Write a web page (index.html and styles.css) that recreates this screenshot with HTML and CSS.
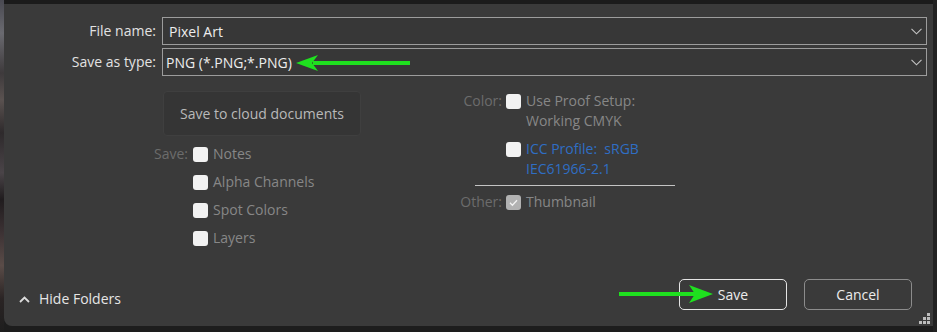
FILE: index.html
```html
<!DOCTYPE html>
<html lang="en">
<head>
<meta charset="utf-8">
<title>Save As</title>
<link rel="stylesheet" href="styles.css">
</head>
<body>
<div class="screen">
  <div class="photo"></div>
  <div class="main">
    <div class="topbar"></div>
    <div class="dialog">
      <div class="fields">
        <label class="flabel">File name:</label>
        <div class="combo"><span class="val name">Pixel Art</span><svg class="chev" width="11" height="7" viewBox="0 0 11 7"><path d="M0.5 0.8 L5.5 5.8 L10.5 0.8" fill="none" stroke="#c4c4c4" stroke-width="1.1"/></svg></div>
        <label class="flabel">Save as type:</label>
        <div class="combo"><span class="val type">PNG (*.PNG;*.PNG)</span><svg class="chev" width="11" height="7" viewBox="0 0 11 7"><path d="M0.5 0.8 L5.5 5.8 L10.5 0.8" fill="none" stroke="#c4c4c4" stroke-width="1.1"/></svg></div>
      </div>

      <div class="options">
        <div class="col-left">
          <button class="cloud">Save to cloud documents</button>
          <div class="opt-grid">
            <span class="olabel">Save:</span>
            <div class="check"><span class="cb"></span><span class="ctext">Notes</span></div>
            <span></span>
            <div class="check"><span class="cb"></span><span class="ctext">Alpha Channels</span></div>
            <span></span>
            <div class="check"><span class="cb"></span><span class="ctext">Spot Colors</span></div>
            <span></span>
            <div class="check"><span class="cb"></span><span class="ctext">Layers</span></div>
          </div>
        </div>

        <div class="col-right">
          <div class="rgrid">
            <span class="olabel">Color:</span>
            <div class="check"><span class="cb"></span><span class="ctext">Use Proof Setup:<br>Working CMYK</span></div>
            <span></span>
            <div class="check icc"><span class="cb"></span><span class="ctext link">ICC Profile:&nbsp; sRGB<br>IEC61966-2.1</span></div>
          </div>
          <div class="sep"></div>
          <div class="rgrid">
            <span class="olabel">Other:</span>
            <div class="check"><span class="cb checked"><svg width="15" height="15" viewBox="0 0 15 15"><path d="M4 7.8 L6.4 10.2 L11 5.2" fill="none" stroke="#f2f2f2" stroke-width="1.3"/></svg></span><span class="ctext">Thumbnail</span></div>
          </div>
        </div>
      </div>

      <div class="footer">
        <button class="hide"><svg width="11" height="7" viewBox="0 0 11 7"><path d="M1 6 L5.5 1.5 L10 6" fill="none" stroke="#dcdcdc" stroke-width="1.8"/></svg><span>Hide Folders</span></button>
        <div class="btns">
          <button class="btn primary">Save</button>
          <button class="btn">Cancel</button>
        </div>
      </div>
      <svg class="grip" width="13" height="12" viewBox="0 0 13 12">
        <rect x="9" y="0" width="3" height="3" fill="#bdbdbd"/>
        <rect x="5" y="4" width="3" height="3" fill="#bdbdbd"/>
        <rect x="9" y="4" width="3" height="3" fill="#bdbdbd"/>
        <rect x="1" y="8" width="3" height="3" fill="#bdbdbd"/>
        <rect x="5" y="8" width="3" height="3" fill="#bdbdbd"/>
        <rect x="9" y="8" width="3" height="3" fill="#bdbdbd"/>
      </svg>
    </div>
    <div class="bottombar"></div>
  </div>
  <div class="rightbar"></div>

  <svg class="arrow arrow-type" width="120" height="20" viewBox="0 0 120 20">
    <rect x="18" y="8" width="97" height="4" fill="#1fe01f"/>
    <path d="M1 10 L23 2 L17 10 L23 18 Z" fill="#1fe01f"/>
  </svg>
  <svg class="arrow arrow-save" width="100" height="20" viewBox="0 0 100 20">
    <rect x="0" y="8" width="80" height="4" fill="#1fe01f"/>
    <path d="M94 10 L70 1 L76 10 L70 19 Z" fill="#1fe01f"/>
  </svg>
</div>
</body>
</html>
```

FILE: styles.css
```css
* { box-sizing: border-box; }

html, body {
  margin: 0;
  padding: 0;
  background: #1d1d1d;
  font-family: "Open Sans", "Noto Sans", sans-serif;
  font-size: 14px;
}

.screen {
  position: relative;
  display: flex;
  width: 937px;
  height: 332px;
  overflow: hidden;
}

.photo {
  width: 4px;
  height: 332px;
  background: linear-gradient(to bottom,
    #4a4a52 0%, #6a6a70 10%, #3e3a3c 22%, #5a5250 30%, #2e2a2c 40%,
    #4a4448 52%, #201c1e 60%, #3c3234 70%, #5a4c48 80%, #2a2424 90%, #1e1e1e 100%);
}

.main {
  width: 929px;
  display: flex;
  flex-direction: column;
}

.topbar {
  height: 4px;
  background: #1b1b1b;
}

.bottombar {
  flex: 1;
  background: #1d1d1d;
}

.rightbar {
  width: 4px;
  background: #222222;
}

.dialog {
  position: relative;
  height: 322px;
  background: #3a3a3a;
  border-bottom-left-radius: 8px;
  display: flex;
  flex-direction: column;
}

/* file name / type */
.fields {
  display: grid;
  grid-template-columns: 152px 1fr;
  grid-auto-rows: 28px;
  column-gap: 6px;
  row-gap: 3px;
  margin-top: 13px;
  padding-right: 6px;
}

.flabel {
  text-align: right;
  color: #e2e2e2;
  line-height: 28px;
}

.combo {
  height: 28px;
  border: 1px solid #9c9c9c;
  background: #373737;
  display: flex;
  align-items: center;
  justify-content: space-between;
  padding-right: 4px;
}

.val {
  color: #ededed;
}

.val.name { padding-left: 6px; }
.val.type { padding-left: 3px; }

.chev {
  display: block;
}

/* options */
.options {
  display: flex;
  margin-top: 15px;
  padding-left: 140px;
}

.col-left {
  width: 220px;
  display: flex;
  flex-direction: column;
}

.cloud {
  width: 198px;
  height: 45px;
  margin-left: 19px;
  background: #353535;
  border: 1px solid #3f3f3f;
  border-radius: 4px;
  color: #b9b9b9;
  font: inherit;
  padding: 0;
}

.opt-grid {
  display: grid;
  grid-template-columns: 44px auto;
  column-gap: 5px;
  row-gap: 8px;
  margin-top: 8px;
}

.olabel {
  text-align: right;
  color: #6c6c6c;
  line-height: 20px;
}

.check {
  display: flex;
  align-items: flex-start;
  gap: 5px;
  line-height: 20px;
}

.cb {
  flex: none;
  width: 15px;
  height: 15px;
  margin-top: 3px;
  background: #f2f2f2;
  border-radius: 3px;
}

.cb.checked {
  background: #b2b2b2;
}

.cb svg { display: block; }

.ctext {
  color: #878787;
}

.ctext.link {
  color: #2f6ec4;
}

.col-right {
  margin-left: 76px;
  display: flex;
  flex-direction: column;
}

.rgrid {
  display: grid;
  grid-template-columns: 62px auto;
  column-gap: 4px;
  row-gap: 8px;
}

.sep {
  width: 200px;
  height: 1px;
  margin: 6px 0 6px 35px;
  background: #c4c4c4;
}

/* footer */
.footer {
  margin-top: auto;
  display: flex;
  align-items: flex-end;
  justify-content: space-between;
  padding: 0 21px 16px 15px;
}

.hide {
  display: flex;
  align-items: center;
  gap: 9px;
  background: none;
  border: none;
  padding: 0;
  margin-bottom: 1px;
  color: #e6e6e6;
  font: inherit;
  line-height: 20px;
}

.hide svg { display: block; }

.btns {
  display: flex;
  gap: 17px;
}

.btn {
  width: 108px;
  height: 31px;
  background: #3a3a3a;
  border: 1px solid #8c8c8c;
  border-radius: 5px;
  color: #ececec;
  font: inherit;
  padding: 0;
}

.btn.primary {
  border: 1.5px solid #e4e4e4;
}

.grip {
  position: absolute;
  right: 2px;
  bottom: 1px;
}

/* annotation arrows over the dialog */
.arrow {
  position: absolute;
}

.arrow-type {
  left: 295px;
  top: 53px;
}

.arrow-save {
  left: 619px;
  top: 284px;
}
```
